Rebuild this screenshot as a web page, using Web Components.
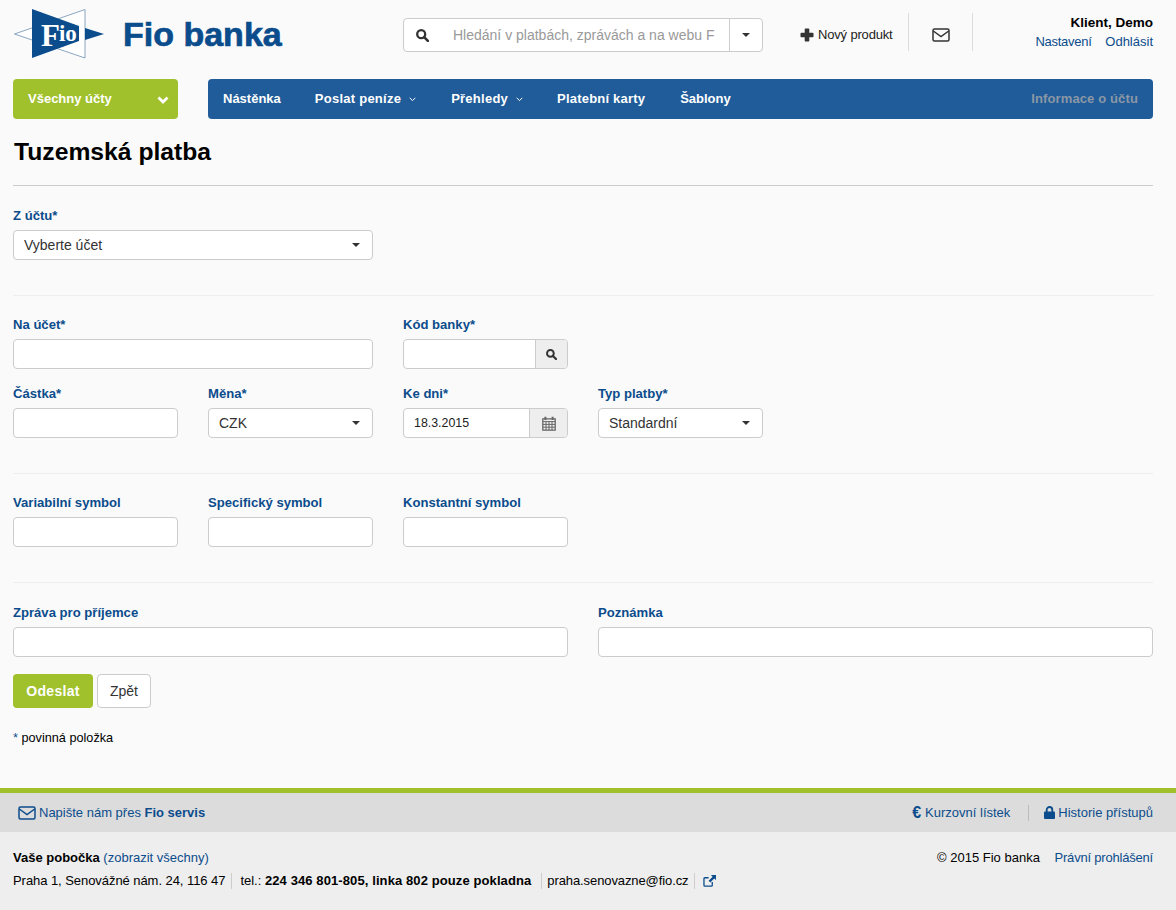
<!DOCTYPE html>
<html lang="cs">
<head>
<meta charset="utf-8">
<title>Tuzemská platba</title>
<style>
  html, body { margin: 0; padding: 0; background: #fafafa; }
  body { font-family: "Liberation Sans", Arial, sans-serif; font-size: 14px; color: #000; }
</style>
</head>
<body>
<fio-page>
  <fio-header></fio-header>
  <fio-nav></fio-nav>
  <fio-title>Tuzemská platba</fio-title>

  <fio-section wide>
    <fio-field label="Z účtu*" span="2"><fio-select value="Vyberte účet"></fio-select></fio-field>
  </fio-section>

  <fio-section>
    <fio-field label="Na účet*" span="2"><fio-input></fio-input></fio-field>
    <fio-field label="Kód banky*"><fio-input addon="search"></fio-input></fio-field>
    <fio-field label="Částka*" newrow><fio-input></fio-input></fio-field>
    <fio-field label="Měna*"><fio-select value="CZK"></fio-select></fio-field>
    <fio-field label="Ke dni*"><fio-input addon="calendar" value="18.3.2015"></fio-input></fio-field>
    <fio-field label="Typ platby*"><fio-select value="Standardní"></fio-select></fio-field>
  </fio-section>

  <fio-section>
    <fio-field label="Variabilní symbol"><fio-input></fio-input></fio-field>
    <fio-field label="Specifický symbol"><fio-input></fio-input></fio-field>
    <fio-field label="Konstantní symbol"><fio-input></fio-input></fio-field>
  </fio-section>

  <fio-section wide last>
    <fio-field label="Zpráva pro příjemce" span="3"><fio-input></fio-input></fio-field>
    <fio-field label="Poznámka" span="3"><fio-input></fio-input></fio-field>
  </fio-section>

  <fio-actions></fio-actions>
  <fio-footer></fio-footer>
</fio-page>

<script>
const icons = {
  search: '<svg viewBox="0 0 14 14" width="13" height="13"><circle cx="5.6" cy="5.6" r="4.300" fill="none" stroke="currentColor" stroke-width="2.500"/><path d="M8.800 8.800l4 4" stroke="currentColor" stroke-width="2.800" stroke-linecap="round"/></svg>',
  caret: '<svg viewBox="0 0 8 4" width="8" height="4"><path d="M0 0h8L4 4z" fill="currentColor"/></svg>',
  plus: '<svg viewBox="0 0 14 14" width="14" height="14"><path d="M5.500 .5h3a.8.8 0 0 1 .8.8v3.400h3.400a.8.8 0 0 1 .8.8v3a.8.8 0 0 1-.8.8H9.300v3.400a.8.8 0 0 1-.8.8h-3a.8.8 0 0 1-.8-.8V9.300H1.300a.8.8 0 0 1-.8-.8v-3a.8.8 0 0 1 .8-.8h3.400V1.300a.8.8 0 0 1 .8-.8z" fill="currentColor"/></svg>',
  mail: '<svg viewBox="0 0 18 14" width="18" height="14"><rect x="1" y="1" width="16" height="12" rx="1.500" fill="none" stroke="currentColor" stroke-width="1.500"/><path d="M1.300 3l7.700 5.600L16.700 3" fill="none" stroke="currentColor" stroke-width="1.500"/></svg>',
  calendar: '<svg viewBox="0 0 14 15" width="14" height="15"><path d="M.8 2.800h12.400v11.400H.8z" fill="none" stroke="currentColor" stroke-width="1.300"/><path d="M1 5.600h12M1 8.400h12M1 11.200h12M4 5.600v8.600M7 5.600v8.600M10 5.600v8.600" stroke="currentColor" stroke-width="1"/><path d="M3.400 .8v3.200M10.600 .8v3.200" stroke="currentColor" stroke-width="2"/></svg>',
  lock: '<svg viewBox="0 0 11 13" width="11" height="13"><path d="M2.700 6V3.800a2.800 2.800 0 0 1 5.600 0V6" fill="none" stroke="currentColor" stroke-width="1.800"/><rect y="5.500" width="11" height="7.500" rx="1" fill="currentColor"/></svg>',
  external: '<svg viewBox="0 0 14 13" width="13" height="12"><path d="M10 7.500V11a1 1 0 0 1-1 1H2a1 1 0 0 1-1-1V4a1 1 0 0 1 1-1h4" fill="none" stroke="currentColor" stroke-width="1.400"/><path d="M8.500 0H14v5.500l-1.900-1.800-4.300 4.300-1.700-1.700 4.300-4.300z" fill="currentColor"/></svg>',
  chevron: '<svg viewBox="0 0 12 8" width="12" height="8"><path d="M1.500 1.500L6 6l4.500-4.500" fill="none" stroke="currentColor" stroke-width="2.800"/></svg>',
  angle: '<svg viewBox="0 0 7 5" width="7" height="5"><path d="M.7 .8L3.500 3.600 6.300 .8" fill="none" stroke="currentColor" stroke-width="1"/></svg>'
};

class FioPage extends HTMLElement {
  connectedCallback() {
    this.attachShadow({ mode: 'open' });
    this.shadowRoot.innerHTML = `
      <style>
        :host { display: flex; flex-direction: column; min-height: 910px; }
      </style>
      <slot></slot>
    `;
  }
}

class FioHeader extends HTMLElement {
  connectedCallback() {
    this.attachShadow({ mode: 'open' });
    this.shadowRoot.innerHTML = `
      <style>
        :host { display: flex; height: 79px; padding: 0 23px 0 13px; box-sizing: border-box; align-items: flex-start; }
        .logo { width: 390px; height: 79px; display: flex; align-items: flex-start; flex: none; }
        .logo svg { margin-top: 9px; flex: none; }
        .brand { font-size: 34px; font-weight: bold; color: #0b4c8c; -webkit-text-stroke: .7px #0b4c8c; margin: 14px 0 0 18px; line-height: 40px; white-space: nowrap; }
        .search { width: 360px; height: 34px; margin-top: 18px; flex: none; box-sizing: border-box; border: 1px solid #ccc; border-radius: 4px; background: #fff; display: flex; align-items: center; color: #333; }
        .search .lens { width: 49px; padding-left: 12px; box-sizing: border-box; display: flex; flex: none; }
        .search .ph { width: 276px; color: #999; font-size: 14px; white-space: nowrap; flex: none; }
        .search .drop { flex: 1; align-self: stretch; border-left: 1px solid #ccc; display: flex; align-items: center; justify-content: center; }
        .product { margin: 26px 0 0 37px; display: flex; align-items: center; gap: 4px; font-size: 13px; letter-spacing: -.17px; color: #222; height: 17px; width: 108px; flex: none; white-space: nowrap; }
        .product svg { color: #333; margin-top: 1px; }
        .mail { margin-top: 13px; width: 63px; height: 33px; padding-top: 5px; border-left: 1px solid #ddd; border-right: 1px solid #ddd; display: flex; align-items: center; justify-content: center; color: #333; flex: none; }
        .user { margin-left: auto; text-align: right; padding-top: 13px; font-size: 13px; line-height: 19px; }
        .user b { display: block; color: #000; font-size: 13.5px; }
        .user a { color: #0b4c8c; text-decoration: none; margin-left: 10px; }
        .user a.set { letter-spacing: -.25px; }
      </style>
      <div class="logo">
        <svg width="92" height="50" viewBox="13 9 92 50">
          <path d="M85 9.500V58L14.500 34z" fill="#fff" stroke="#6d8fb3" stroke-width=".8"/>
          <path d="M32 9L79 26V41L32 58z" fill="#0b4c8c"/>
          <path d="M85 28L104 34 85 40z" fill="#0b4c8c"/>
          <text x="41" y="46" font-family="Liberation Serif" font-weight="bold" fill="#fff"><tspan font-size="31">F</tspan><tspan font-size="23" dx="-1" dy="-5">io</tspan></text>
        </svg>
        <div class="brand">Fio banka</div>
      </div>
      <div class="search">
        <span class="lens">${icons.search}</span>
        <span class="ph">Hledání v platbách, zprávách a na webu F</span>
        <span class="drop">${icons.caret}</span>
      </div>
      <div class="product">${icons.plus}<span>Nový produkt</span></div>
      <div class="mail">${icons.mail}</div>
      <div class="user"><b>Klient, Demo</b><a class="set">Nastavení</a> <a>Odhlásit</a></div>
    `;
  }
}

class FioNav extends HTMLElement {
  connectedCallback() {
    this.attachShadow({ mode: 'open' });
    this.shadowRoot.innerHTML = `
      <style>
        :host { display: flex; height: 40px; padding: 0 23px 0 13px; gap: 30px; font-size: 13px; font-weight: bold; color: #fff; }
        .accounts { width: 165px; box-sizing: border-box; background: #a0c12b; border-radius: 4px; padding: 0 9px 2px 15px; display: flex; align-items: center; justify-content: space-between; flex: none; }
        .accounts svg { margin-top: 3px; }
        .bar { flex: 1; background: #1f5c99; border-radius: 4px; display: flex; align-items: center; padding: 0 15px 2px; }
        .item { margin-right: 34px; display: flex; align-items: center; gap: 8px; white-space: nowrap; letter-spacing: .25px; }
        .item svg { margin-top: 2px; }
        .info { margin-left: auto; color: #8b97a5; letter-spacing: .13px; }
      </style>
      <div class="accounts"><span>Všechny účty</span>${icons.chevron}</div>
      <div class="bar">
        <span class="item" style="letter-spacing:0">Nástěnka</span>
        <span class="item" style="margin-right:35px">Poslat peníze ${icons.angle}</span>
        <span class="item">Přehledy ${icons.angle}</span>
        <span class="item" style="letter-spacing:.2px;margin-right:35px">Platební karty</span>
        <span class="item" style="letter-spacing:0">Šablony</span>
        <span class="info">Informace o účtu</span>
      </div>
    `;
  }
}

class FioTitle extends HTMLElement {
  connectedCallback() {
    this.attachShadow({ mode: 'open' });
    this.shadowRoot.innerHTML = `
      <style>
        :host { display: block; margin: 0 23px 0 13px; height: 67px; box-sizing: border-box; border-bottom: 1px solid #ccc; }
        h1 { margin: 0; padding: 19px 0 0 1px; font-size: 24.7px; line-height: 28px; font-weight: bold; color: #000; }
      </style>
      <h1><slot></slot></h1>
    `;
  }
}

class FioSection extends HTMLElement {
  connectedCallback() {
    this.attachShadow({ mode: 'open' });
    this.shadowRoot.innerHTML = `
      <style>
        :host { display: grid; grid-template-columns: repeat(6, 165px); column-gap: 30px; row-gap: 16px; margin: 0 23px 0 13px; padding: 20px 0 35px; border-bottom: 1px solid #eee; }
        :host([wide]) { padding-top: 21px; }
        :host([last]) { border-bottom: 0; padding-bottom: 17px; }
      </style>
      <slot></slot>
    `;
  }
}

class FioField extends HTMLElement {
  connectedCallback() {
    const span = this.getAttribute('span') || 1;
    const start = this.hasAttribute('newrow') ? '1 / ' : '';
    this.attachShadow({ mode: 'open' });
    this.shadowRoot.innerHTML = `
      <style>
        :host { display: block; grid-column: ${start}span ${span}; }
        label { display: block; font-size: 13.1px; line-height: 18px; font-weight: bold; color: #0b4c8c; margin-bottom: 5px; white-space: nowrap; }
      </style>
      <label>${this.getAttribute('label')}</label>
      <slot></slot>
    `;
  }
}

class FioInput extends HTMLElement {
  connectedCallback() {
    const addon = this.getAttribute('addon');
    const value = this.getAttribute('value') || '';
    const wide = addon === 'search' ? 32 : 38;
    this.attachShadow({ mode: 'open' });
    this.shadowRoot.innerHTML = `
      <style>
        :host { display: flex; height: 30px; box-sizing: border-box; border: 1px solid #ccc; border-radius: 4px; background: #fff; overflow: hidden; }
        .val { flex: 1; padding: 0 10px; font-size: 12.4px; line-height: 28px; color: #222; }
        .addon { width: ${wide}px; box-sizing: border-box; flex: none; background: #eee; border-left: 1px solid #ccc; display: flex; align-items: center; justify-content: center; color: #333; }
        .addon.search svg { width: 11px; height: 11px; }
        .addon.calendar { color: #666; }
      </style>
      <div class="val">${value}</div>
      ${addon ? `<div class="addon ${addon}">${icons[addon]}</div>` : ''}
    `;
  }
}

class FioSelect extends HTMLElement {
  connectedCallback() {
    this.attachShadow({ mode: 'open' });
    this.shadowRoot.innerHTML = `
      <style>
        :host { display: flex; align-items: center; justify-content: space-between; height: 30px; box-sizing: border-box; border: 1px solid #ccc; border-radius: 4px; background: #fff; padding: 0 12px 0 10px; font-size: 14px; color: #333; }
      </style>
      <span>${this.getAttribute('value')}</span>${icons.caret}
    `;
  }
}

class FioActions extends HTMLElement {
  connectedCallback() {
    this.attachShadow({ mode: 'open' });
    this.shadowRoot.innerHTML = `
      <style>
        :host { display: block; padding: 0 13px; flex: 1; }
        .btns { display: flex; gap: 4px; }
        button { height: 34px; border-radius: 4px; font-family: inherit; font-size: 14px; padding: 0; }
        .send { width: 80px; background: #a0c12b; border: 0; color: #fff; font-weight: bold; letter-spacing: .3px; }
        .back { width: 54px; background: #fff; border: 1px solid #ccc; color: #333; }
        p { margin: 22px 0 0; font-size: 12.7px; line-height: 16px; color: #000; }
        p span { color: #0b4c8c; }
      </style>
      <div class="btns"><button class="send">Odeslat</button><button class="back">Zpět</button></div>
      <p><span>*</span> povinná položka</p>
    `;
  }
}

class FioFooter extends HTMLElement {
  connectedCallback() {
    this.attachShadow({ mode: 'open' });
    this.shadowRoot.innerHTML = `
      <style>
        :host { display: block; font-size: 13px; color: #000; }
        a { color: #0b4c8c; text-decoration: none; }
        .top { border-top: 5px solid #a0c12b; height: 39px; background: #dcdcdc; display: flex; align-items: center; justify-content: space-between; padding: 0 23px 0 18px; color: #0b4c8c; }
        .top div { display: flex; align-items: center; }
        .top svg { margin-right: 3px; }
        .euro { font-size: 16px; font-weight: bold; margin-right: 4px; line-height: 14px; }
        .sep { width: 1px; height: 16px; background: #bbb; margin: 0 15px 0 18px; }
        .low { height: 78px; box-sizing: border-box; background: #eee; padding: 17px 23px 0 13px; display: flex; justify-content: space-between; line-height: 18px; }
        .addr { display: flex; align-items: center; margin-top: 6px; white-space: nowrap; }
        .addr .cell { border-right: 1px solid #ccc; padding-right: 6px; margin-right: 8px; height: 16px; line-height: 16px; letter-spacing: -.06px; }
        .addr .cell.mid { margin-right: 5px; padding-right: 10px; letter-spacing: 0; }
        .addr .cell.mid b { letter-spacing: .1px; }
        .addr .cell.mail { margin-right: 8px; padding-right: 6px; letter-spacing: -.1px; }
        .addr svg { color: #0b4c8c; }
        .legal a { margin-left: 11px; letter-spacing: -.2px; }
      </style>
      <div class="top">
        <div><span style="display:flex">${icons.mail}</span><a>Napište nám přes <b>Fio servis</b></a></div>
        <div><span class="euro">€</span><a>Kurzovní lístek</a><span class="sep"></span>${icons.lock}<a>Historie přístupů</a></div>
      </div>
      <div class="low">
        <div>
          <div><b>Vaše pobočka</b> <a>(zobrazit všechny)</a></div>
          <div class="addr">
            <span class="cell">Praha 1, Senovážné nám. 24, 116 47</span>
            <span class="cell mid">tel.: <b>224 346 801-805, linka 802 pouze pokladna</b></span>
            <span class="cell mail">praha.senovazne@fio.cz</span>
            ${icons.external}
          </div>
        </div>
        <div class="legal">© 2015 Fio banka <a>Právní prohlášení</a></div>
      </div>
    `;
  }
}

customElements.define('fio-page', FioPage);
customElements.define('fio-header', FioHeader);
customElements.define('fio-nav', FioNav);
customElements.define('fio-title', FioTitle);
customElements.define('fio-section', FioSection);
customElements.define('fio-field', FioField);
customElements.define('fio-input', FioInput);
customElements.define('fio-select', FioSelect);
customElements.define('fio-actions', FioActions);
customElements.define('fio-footer', FioFooter);
</script>
</body>
</html>
